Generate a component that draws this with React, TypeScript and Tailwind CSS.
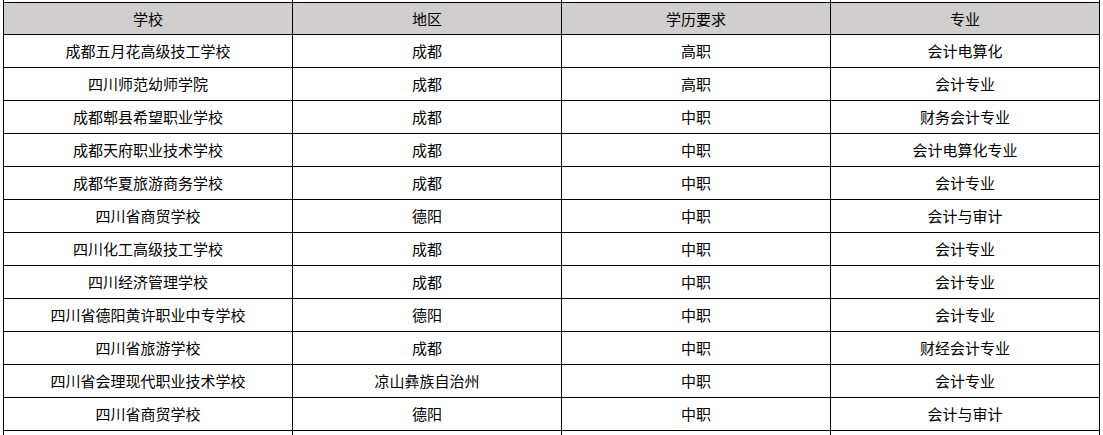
import React from "react";

const rows: [string, string, string, string][] = [
  ["成都五月花高级技工学校", "成都", "高职", "会计电算化"],
  ["四川师范幼师学院", "成都", "高职", "会计专业"],
  ["成都郫县希望职业学校", "成都", "中职", "财务会计专业"],
  ["成都天府职业技术学校", "成都", "中职", "会计电算化专业"],
  ["成都华夏旅游商务学校", "成都", "中职", "会计专业"],
  ["四川省商贸学校", "德阳", "中职", "会计与审计"],
  ["四川化工高级技工学校", "成都", "中职", "会计专业"],
  ["四川经济管理学校", "成都", "中职", "会计专业"],
  ["四川省德阳黄许职业中专学校", "德阳", "中职", "会计专业"],
  ["四川省旅游学校", "成都", "中职", "财经会计专业"],
  ["四川省会理现代职业技术学校", "凉山彝族自治州", "中职", "会计专业"],
  ["四川省商贸学校", "德阳", "中职", "会计与审计"],
];

const header = ["学校", "地区", "学历要求", "专业"];

export default function App() {
  return (
    <div
      className="w-[1103px] h-[435px] overflow-hidden bg-white text-black"
      style={{ fontFamily: '"SimSun", "Noto Sans CJK SC", sans-serif' }}
    >
      <div className="ml-[3px] border-l border-black grid grid-cols-[289px_269px_269px_269px] text-[15px] leading-none">
        {[0, 1, 2, 3].map((i) => (
          <div key={"t" + i} className="h-[2px] border-r border-black" />
        ))}
        {header.map((h, i) => (
          <div
            key={"h" + i}
            className="h-[33px] border-t border-r border-b border-black bg-[#d0cece] flex items-center justify-center"
          >
            {h}
          </div>
        ))}
        {rows.map((r, ri) =>
          r.map((c, ci) => (
            <div
              key={ri + "-" + ci}
              className="h-[33px] border-r border-b border-black flex items-center justify-center pb-px"
            >
              {c}
            </div>
          ))
        )}
        {[0, 1, 2, 3].map((i) => (
          <div key={"b" + i} className="h-[33px] border-r border-black" />
        ))}
      </div>
    </div>
  );
}
